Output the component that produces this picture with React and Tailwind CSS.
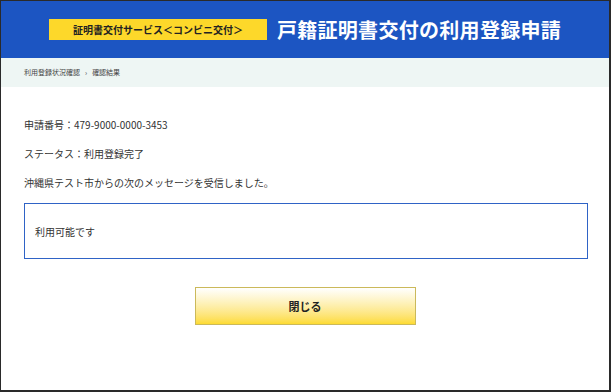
import React from 'react';

const jp = { fontFamily: '"Noto Sans CJK JP", "Noto Sans", sans-serif' };

export default function App() {
    return (
        <div style={jp} className="w-[611px] h-[392px] bg-white border-l border-t border-r-2 border-b-2 border-[#2a2a2a] flex flex-col text-[#333]">
            <header className="h-[57px] bg-[#1c55c2] flex items-center justify-center gap-[10px]">
                <div className="w-[218px] h-[21px] bg-[#fdd82a] flex items-center justify-center text-[10px] font-bold text-[#222] mt-[-1px]">
                    証明書交付サービス＜コンビニ交付＞
                </div>
                <h1 className="text-[20px] font-bold text-white leading-none tracking-[0.3px]">戸籍証明書交付の利用登録申請</h1>
            </header>
            <nav className="h-[29px] bg-[#eef6f4] flex items-center px-[23px] text-[7px] text-[#444] gap-[5px]">
                <span>利用登録状況確認</span>
                <span>›</span>
                <span>確認結果</span>
            </nav>
            <main className="flex-1 px-[23px] pt-[31px] text-[10px]">
                <p className="leading-[14px]">申請番号：479-9000-0000-3453</p>
                <p className="leading-[14px] mt-[15px]">ステータス：利用登録完了</p>
                <p className="leading-[14px] mt-[15px]">沖縄県テスト市からの次のメッセージを受信しました。</p>
                <div className="mt-[13px] mr-[-2px] h-[56px] border border-[#2f63c6] flex items-center px-[10px]">
                    利用可能です
                </div>
                <div className="flex justify-center mt-[28px]">
                    <button className="w-[221px] h-[38px] border border-[#cbb95a] bg-gradient-to-b from-white to-[#fddb2e] text-[11px] font-bold text-[#222]">
                        閉じる
                    </button>
                </div>
            </main>
        </div>
    );
}
